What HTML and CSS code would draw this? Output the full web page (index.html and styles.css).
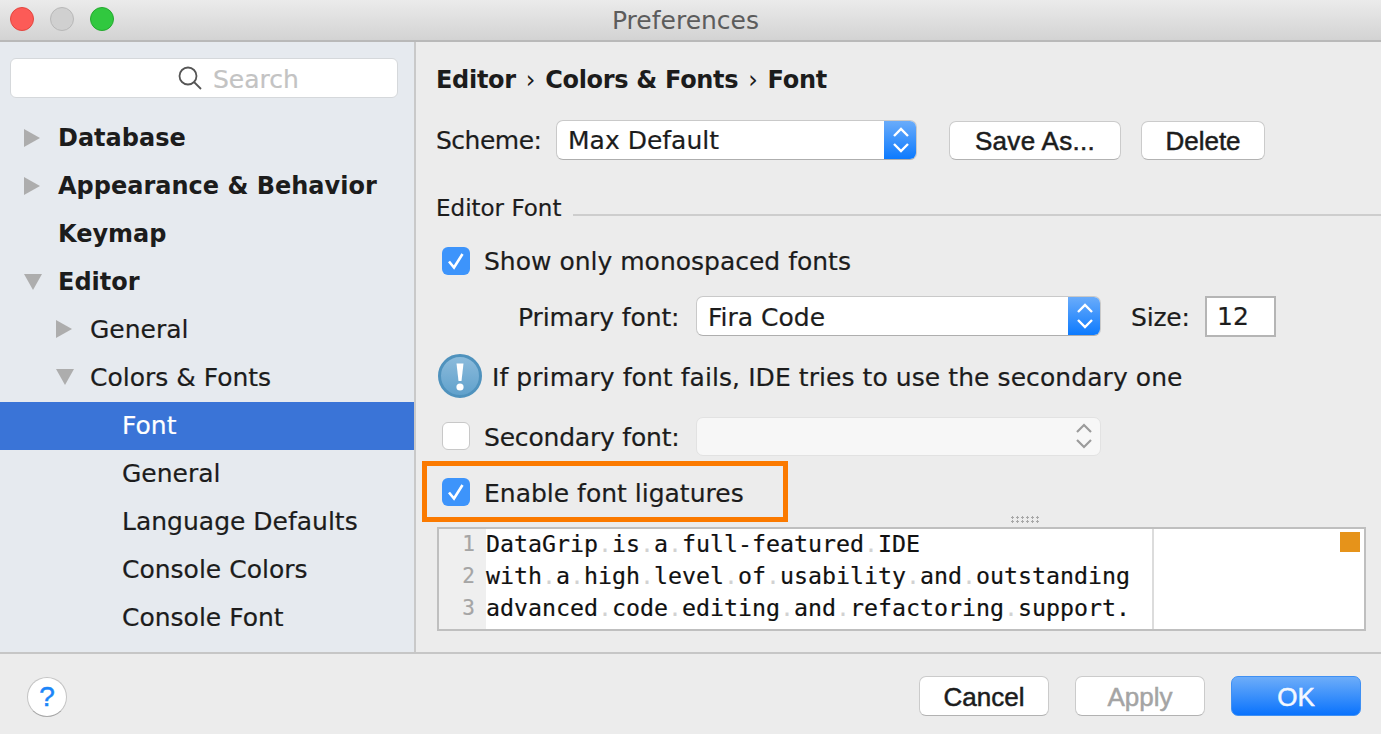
FILE: index.html
```html
<!DOCTYPE html>
<html lang="en">
<head>
<meta charset="utf-8">
<title>Preferences</title>
<link rel="stylesheet" href="styles.css">
</head>
<body>
<div class="window">
  <header class="titlebar">
    <div class="lights">
      <span class="light red"></span>
      <span class="light gray"></span>
      <span class="light green"></span>
    </div>
    <div class="title">Preferences</div>
  </header>
  <div class="body">
    <aside class="sidebar">
      <div class="search">
        <svg class="search-icon" width="24" height="24" viewBox="0 0 24 24"><circle cx="10" cy="10" r="8.5" fill="none" stroke="#555" stroke-width="1.8"/><path d="M16 16l7 7" stroke="#555" stroke-width="1.8" fill="none"/></svg>
        <span class="search-text">Search</span>
      </div>
      <ul class="tree">
        <li class="row l0 bold"><svg class="arrow" width="18" height="18" viewBox="0 0 18 18"><path d="M0 0l16 9L0 18z" fill="#adadad"/></svg>Database</li>
        <li class="row l0 bold"><svg class="arrow" width="18" height="18" viewBox="0 0 18 18"><path d="M0 0l16 9L0 18z" fill="#adadad"/></svg>Appearance &amp; Behavior</li>
        <li class="row l0 bold"><span class="arrow"></span>Keymap</li>
        <li class="row l0 bold"><svg class="arrow" width="18" height="18" viewBox="0 0 18 18"><path d="M0 1h18l-9 16z" fill="#adadad"/></svg>Editor</li>
        <li class="row l1"><svg class="arrow" width="18" height="18" viewBox="0 0 18 18"><path d="M0 0l16 9L0 18z" fill="#adadad"/></svg>General</li>
        <li class="row l1"><svg class="arrow" width="18" height="18" viewBox="0 0 18 18"><path d="M0 1h18l-9 16z" fill="#adadad"/></svg>Colors &amp; Fonts</li>
        <li class="row l2 selected">Font</li>
        <li class="row l2">General</li>
        <li class="row l2">Language Defaults</li>
        <li class="row l2">Console Colors</li>
        <li class="row l2">Console Font</li>
      </ul>
    </aside>
    <main class="panel">
      <h1 class="crumbs">Editor <span class="sep">›</span> Colors &amp; Fonts <span class="sep">›</span> Font</h1>
      <div class="scheme-row">
        <span class="label scheme-label">Scheme:</span>
        <div class="select scheme-select">
          <span class="select-value">Max Default</span>
          <span class="stepper"><svg width="20" height="28" viewBox="0 0 20 28"><path d="M3 10l7-7 7 7M3 18l7 7 7-7" fill="none" stroke="#fff" stroke-width="2.4"/></svg></span>
        </div>
        <button class="btn save">Save As...</button>
        <button class="btn delete">Delete</button>
      </div>
      <div class="legend"><span>Editor Font</span><i class="legend-line"></i></div>
      <div class="check-row show-row">
        <span class="check on"><svg width="20" height="20" viewBox="0 0 20 20"><path d="M3 10.5l5 6L16.5 3" fill="none" stroke="#fff" stroke-width="2.6"/></svg></span>
        <span>Show only monospaced fonts</span>
      </div>
      <div class="primary-row">
        <span class="label primary-label">Primary font:</span>
        <div class="select primary-select">
          <span class="select-value">Fira Code</span>
          <span class="stepper"><svg width="20" height="28" viewBox="0 0 20 28"><path d="M3 10l7-7 7 7M3 18l7 7 7-7" fill="none" stroke="#fff" stroke-width="2.4"/></svg></span>
        </div>
        <span class="label size-label">Size:</span>
        <div class="size-input">12</div>
      </div>
      <div class="info-row">
        <svg class="info-icon" width="44" height="44" viewBox="0 0 44 44">
          <defs><linearGradient id="infoFill" x1="0" y1="0" x2="0" y2="1"><stop offset="0" stop-color="#8dbcdc"/><stop offset="1" stop-color="#5fa0cb"/></linearGradient></defs>
          <circle cx="22" cy="22" r="20.5" fill="url(#infoFill)" stroke="#4f92bd" stroke-width="3"/>
          <path d="M18.5 9.5h7L23.5 27h-3z" fill="#fff"/>
          <circle cx="22" cy="33" r="3.6" fill="#fff"/>
        </svg>
        <span class="info-text">If primary font fails, IDE tries to use the secondary one</span>
      </div>
      <div class="check-row secondary-row">
        <span class="check off"></span>
        <span class="secondary-label">Secondary font:</span>
        <div class="select disabled-select">
          <svg width="20" height="28" viewBox="0 0 20 28"><path d="M3 10l7-7 7 7M3 18l7 7 7-7" fill="none" stroke="#9b9b9b" stroke-width="2.2"/></svg>
        </div>
      </div>
      <div class="check-row ligatures">
        <span class="check on"><svg width="20" height="20" viewBox="0 0 20 20"><path d="M3 10.5l5 6L16.5 3" fill="none" stroke="#fff" stroke-width="2.6"/></svg></span>
        <span class="ligatures-label">Enable font ligatures</span>
      </div>
      <div class="preview">
        <span class="grip"></span>
        <div class="gutter"><div>1</div><div>2</div><div>3</div></div>
        <div class="code">
          <div>DataGrip<i>.</i>is<i>.</i>a<i>.</i>full-featured<i>.</i>IDE</div>
          <div>with<i>.</i>a<i>.</i>high<i>.</i>level<i>.</i>of<i>.</i>usability<i>.</i>and<i>.</i>outstanding</div>
          <div>advanced<i>.</i>code<i>.</i>editing<i>.</i>and<i>.</i>refactoring<i>.</i>support.</div>
        </div>
        <div class="margin"><span class="marker"></span></div>
      </div>
    </main>
  </div>
  <footer class="footer">
    <button class="help">?</button>
    <div class="actions">
      <button class="btn action">Cancel</button>
      <button class="btn action apply">Apply</button>
      <button class="btn action ok">OK</button>
    </div>
  </footer>
</div>
</body>
</html>
```
FILE: styles.css
```css
* { box-sizing: border-box; }
html, body { margin: 0; padding: 0; }
body {
  width: 1381px;
  height: 734px;
  overflow: hidden;
  font-family: "DejaVu Sans", sans-serif;
  font-size: 25px;
  color: #1c1c1c;
  background: #ececec;
  -webkit-text-stroke: 0.2px currentColor;
}
.window { display: flex; flex-direction: column; height: 734px; }

.titlebar {
  height: 42px;
  flex: none;
  display: flex;
  align-items: center;
  position: relative;
  background: linear-gradient(#ebebeb, #d3d3d3);
  border-bottom: 2px solid #b9b9b9;
}
.lights { display: flex; gap: 16px; padding-left: 10px; margin-top: -2px; }
.light { width: 24px; height: 24px; border-radius: 50%; border: 1px solid; }
.red { background: #fc5b57; border-color: #e3463f; }
.gray { background: #d0d0d0; border-color: #b8b8b8; }
.green { background: #31c83f; border-color: #24a92f; }
.title {
  position: absolute;
  left: 0;
  right: 10px;
  top: 6px;
  text-align: center;
  font-size: 25px;
  line-height: 30px;
  color: #5c5c5c;
  -webkit-text-stroke: 0;
}

.body { flex: 1; display: flex; min-height: 0; border-bottom: 2px solid #c6c6c6; }

.sidebar {
  width: 416px;
  flex: none;
  background: #e6eaef;
  border-right: 2px solid #c9c9c9;
  padding-top: 16px;
  overflow: hidden;
}
.search {
  margin-left: 10px;
  width: 388px;
  height: 40px;
  background: #fff;
  border: 1px solid #d5d8db;
  border-radius: 6px;
  display: flex;
  align-items: center;
  padding-left: 167px;
  gap: 11px;
}
.search-text { color: #c3c3c3; font-size: 25px; padding-top: 2px; }
.tree { list-style: none; margin: 14px 0 0; padding: 0; }
.row {
  height: 48px;
  display: flex;
  align-items: center;
  white-space: nowrap;
  font-size: 25px;
  padding-top: 2px;
}
.bold { font-weight: 700; font-size: 24px; padding-top: 3px; -webkit-text-stroke: 0; }
.arrow { width: 18px; height: 18px; flex: none; margin-right: 16px; }
.l0 { padding-left: 24px; }
.l1 { padding-left: 56px; }
.l2 { padding-left: 122px; }
.selected { background: #3a74d7; color: #fff; margin-top: 2px; margin-bottom: -2px; padding-top: 0; padding-bottom: 1px; }

.panel { flex: 1; padding-left: 20px; min-width: 0; }
.crumbs {
  margin: 0;
  height: 74px;
  display: flex;
  align-items: center;
  gap: 10px;
  font-size: 24px;
  font-weight: 700;
  letter-spacing: -0.3px;
  padding-top: 1px;
  -webkit-text-stroke: 0;
}
.sep { font-weight: 400; }
.label { white-space: nowrap; }
.scheme-label { width: 120px; letter-spacing: -0.5px; }
.primary-label { width: 178px; letter-spacing: -0.1px; padding-top: 2px; }
.size-label { width: 74px; margin-left: 30px; letter-spacing: -0.2px; padding-top: 2px; }

.scheme-row { display: flex; align-items: center; height: 40px; margin-top: 4px; }
.select {
  display: flex;
  align-items: center;
  justify-content: space-between;
  height: 40px;
  background: #fff;
  border: 1px solid #c9c9c9;
  border-bottom-color: #aeaeae;
  border-radius: 7px;
  overflow: hidden;
}
.select-value { padding-left: 11px; }
.primary-select .select-value { padding-top: 2px; }
.stepper {
  width: 33px;
  height: 40px;
  margin-right: -1px;
  display: flex;
  align-items: center;
  justify-content: center;
  background: linear-gradient(#6cadfa, #0a79fe);
}
.scheme-select { width: 361px; }
.btn {
  height: 39px;
  font-family: "Liberation Sans", sans-serif;
  font-size: 26px;
  color: #1c1c1c;
  background: #fff;
  border: 1px solid #cbcbcb;
  border-bottom-color: #b2b2b2;
  border-radius: 7px;
  padding: 2px 0 0;
  -webkit-text-stroke: 0.5px currentColor;
}
.save { width: 172px; margin-left: 32px; letter-spacing: 0.3px; }
.delete { width: 124px; margin-left: 20px; }

.legend {
  display: flex;
  align-items: center;
  height: 28px;
  margin-top: 34px;
  gap: 12px;
  font-size: 23px;
}
.legend-line { flex: 1; height: 2px; background: #cdcdcd; margin-top: 13px; }

.check-row { display: flex; align-items: center; padding-left: 6px; }
.check {
  width: 28px;
  height: 28px;
  flex: none;
  display: flex;
  align-items: center;
  justify-content: center;
  border-radius: 6px;
  margin-right: 14px;
}
.on { background: #3d94fb; }
.off { background: #fff; border: 1px solid #c8c8c8; }
.show-row { height: 36px; margin-top: 21px; }

.primary-row { display: flex; align-items: center; height: 40px; margin-top: 17px; padding-left: 82px; }
.primary-select { width: 405px; }
.size-input {
  width: 71px;
  height: 41px;
  background: #fff;
  border: 2px solid #b5b5b5;
  padding-left: 10px;
  line-height: 37px;
}

.info-row { display: flex; align-items: center; height: 44px; margin-top: 18px; gap: 10px; padding-left: 2px; letter-spacing: 0.07px; }
.info-icon { flex: none; }
.info-text { padding-top: 2px; }

.secondary-row { height: 40px; margin-top: 18px; }
.secondary-label { width: 212px; flex: none; letter-spacing: -0.2px; padding-top: 2px; }
.disabled-select {
  width: 405px;
  height: 39px;
  background: #f7f7f7;
  border-color: #e2e2e2;
  justify-content: flex-end;
  padding-right: 6px;
}

.ligatures {
  width: 366px;
  height: 61px;
  margin-top: 5px;
  margin-left: -14px;
  padding-left: 15px;
  border: 5px solid #fb7a00;
}
.ligatures-label { padding-top: 3px; }

.preview {
  position: relative;
  display: flex;
  width: 929px;
  height: 104px;
  margin-top: 5px;
  margin-left: 1px;
  background: #fff;
  border: 2px solid #bfbfbf;
}
.grip {
  position: absolute;
  left: 572px;
  top: -13px;
  width: 30px;
  height: 8px;
  background: radial-gradient(circle at 1.5px 1.5px, #a8a8a8 1.2px, transparent 1.4px) 0 0 / 5px 4px;
}
.gutter {
  width: 47px;
  flex: none;
  background: #efefef;
  color: #a5a5a5;
  text-align: right;
  padding: 0 11px 0 0;
  font-family: "DejaVu Sans Mono", monospace;
  font-size: 21px;
  line-height: 32px;
}
.gutter div:first-child, .code div:first-child { margin-top: -1px; }
.code {
  width: 668px;
  flex: none;
  font-family: "DejaVu Sans Mono", monospace;
  font-size: 23.25px;
  line-height: 32px;
  color: #111;
  white-space: nowrap;
  border-right: 2px solid #dcdcdc;
}
.code i { font-style: normal; color: #d2d2d2; -webkit-text-stroke: 0; }
.margin { flex: 1; display: flex; justify-content: flex-end; padding: 3px 4px 0 0; }
.marker { width: 20px; height: 20px; background: #e6931a; }

.footer {
  height: 80px;
  flex: none;
  display: flex;
  align-items: center;
  justify-content: space-between;
  padding: 4px 20px 0 27px;
}
.help {
  width: 40px;
  height: 40px;
  padding: 0;
  margin-top: 2px;
  border-radius: 50%;
  background: #fff;
  border: 1px solid #c4c4c4;
  border-bottom-color: #a8a8a8;
  color: #1b85f8;
  font-family: "Liberation Sans", sans-serif;
  font-size: 28px;
  -webkit-text-stroke: 0.5px currentColor;
}
.actions { display: flex; gap: 26px; }
.action { width: 130px; height: 40px; }
.apply { color: #a4a4a4; }
.ok { color: #f4f8ff; background: linear-gradient(#6dadf9, #0a73fd); border-color: #3f90f3; }
```
